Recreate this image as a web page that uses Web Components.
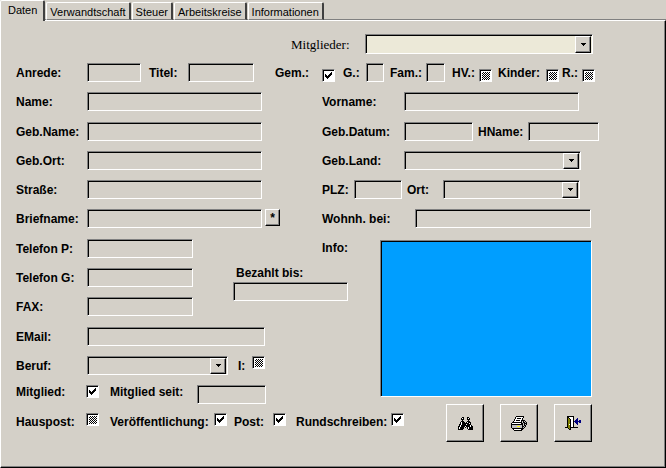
<!DOCTYPE html>
<html lang="de">
<head>
<meta charset="utf-8">
<title>Mitglieder</title>
<style>
  html, body { margin: 0; background: #d4d0c8; }
  body { font: bold 12px/14px "Liberation Sans", Arial, sans-serif; color: #000; }
</style>
</head>
<body>
<member-window></member-window>
<script>
const SUNKEN = `
  .sunken { box-sizing: border-box; margin: 0; border: 1px solid; border-color: #808080 #fff #fff #808080;
    border-radius: 0; box-shadow: inset 1px 1px 0 #000; background: #d4d0c8; outline: none;
    font: inherit; font-weight: normal; appearance: none; width: 100%; min-width: 0; padding: 1px 4px; }`;
const RAISED = `
  .raised { box-sizing: border-box; margin: 0; padding: 0; border: 1px solid; border-color: #fff #000 #000 #fff;
    border-radius: 0; box-shadow: inset -1px -1px 0 #808080; background: #d4d0c8; color: #000; font: inherit; }`;

/* Shared behaviour: a label and one control; --w is the share of the row, --l the label width. */
class FormControl extends HTMLElement {
  connectedCallback() {
    const root = this.attachShadow({ mode: "open" });
    root.innerHTML = `<style>
      ${SUNKEN}${RAISED}
      :host { display: grid; grid-template-columns: var(--l, 71px) minmax(0, 1fr); align-items: center;
        flex: var(--w, 1) 1 0; min-width: 0; margin-left: var(--gap, 0); }
      label { white-space: nowrap; align-self: var(--label-align, center); }
      ${this.css()}</style>
      <label for="c">${this.getAttribute("label")}</label>${this.control()}`;
  }
  css() { return ""; }
}

class TextField extends FormControl {
  css() { return `.sunken { height: 19px; }
    :host([stacked]) { grid-template-columns: minmax(0, 1fr); }
    :host([stacked]) label { padding: 0 0 2px 3px; }`; }
  control() { return `<input id="c" class="sunken" type="text">`; }
}

class ComboField extends FormControl {
  css() { return `
    .combo { display: grid; grid-template-columns: minmax(0, 1fr) 18px; }
    select { grid-area: 1 / 1 / 2 / 3; height: var(--h, 19px); }
    .arrow { grid-area: 1 / 2; justify-self: start; align-self: center; width: 16px;
      height: calc(var(--h, 19px) - 3px); pointer-events: none; display: grid; place-items: center; }
    svg { display: block; }
    :host([main]) label { font: 13px/15px "Liberation Serif", "Times New Roman", serif; }
    :host([main]) .sunken { background: #ece9d8; }`; }
  control() { return `<div class="combo"><select id="c" class="sunken"><option></option></select>
    <span class="arrow raised"><svg width="5" height="3" viewBox="0 0 5 3" shape-rendering="crispEdges"><path d="M0 0h5v1h-1v1h-1v1h-1v-1h-1v-1h-1z"/></svg></span></div>`; }
}

class MemoField extends FormControl {
  css() { return `:host { align-items: start; } label { align-self: start; padding-top: 1px; }
    .sunken { height: 157px; resize: none; background: #009eff; display: block; }`; }
  control() { return `<textarea id="c" class="sunken"></textarea>`; }
}

class CheckField extends FormControl {
  css() { return `
    :host { flex: none; grid-template-columns: var(--l, 71px) 13px; }
    .box { display: grid; align-self: var(--box-align, center); }
    input, svg { grid-area: 1 / 1; }
    input.sunken { width: 13px; height: 13px; padding: 2px 1px 1px 2px; background: #fff; }
    input.sunken:indeterminate { background: repeating-conic-gradient(#000 0 25%, #fff 0 50%) 0 0 / 2px 2px content-box, #fff; }
    svg { place-self: center; pointer-events: none; visibility: hidden; }
    input:checked + svg { visibility: visible; }`; }
  control() { return `<span class="box"><input id="c" class="sunken" type="checkbox">
    <svg width="7" height="7" viewBox="0 0 7 7" shape-rendering="crispEdges"><path d="M0 2h1v1h1v1h1v-1h1v-1h1v-1h1v-1h1v3h-1v1h-1v1h-1v1h-1v1h-1v-1h-1v-1h-1z"/></svg></span>`; }
  connectedCallback() {
    super.connectedCallback();
    const box = this.shadowRoot.querySelector("input");
    box.checked = this.hasAttribute("checked");
    box.indeterminate = !box.checked;
  }
}

const COLORS = { "#": "#000", w: "#fff", g: "#808080", l: "#c0c0c0", y: "#ff0", o: "#808000", b: "#000080" };
const ICONS = {
  find: [
    "....##...##....",
    "...#w#...#w#...",
    "...###...###...",
    "....#.....#....",
    "...###...###...",
    "..#w###.#w###..",
    "..#w#######w#..",
    ".##w####w####..",
    ".#w#########w#.",
    "##w####w####w##",
    "#w####.#.#w####",
    "#w####...#w####",
    "#####.....#####"],
  print: [
    ".....########...",
    "....#wwwwwww#...",
    "....#w####w#....",
    "...#wwwwwww#....",
    "...#w####w####..",
    "..#wwwwwww#l#l#.",
    ".##########l##l#",
    "#wwwwwwwww##l###",
    "############l#l#",
    "#llllllllll#l##.",
    "#lllllyyyll##l#.",
    "#llllllllll#l#..",
    ".############...",
    "..#wwwwwww##....",
    "...########....."],
  exit: [
    "..#######.......",
    "..##wwww#.......",
    "..#o#www#...b...",
    "..#oo#ww#..bb...",
    "..#oo#ww#.bbb.bb",
    "..#oo#ww#bbbbbbb",
    "..#oo#ww#.bbb.bb",
    "..#oo#ww#..bb...",
    "..#ow#ww#...b...",
    "..#oo#ww#.......",
    "..#oo#ww#.......",
    "###oo########...",
    "...#o#..........",
    "....##.........."]
};

class IconButton extends HTMLElement {
  connectedCallback() {
    const rows = ICONS[this.getAttribute("icon")];
    const cells = rows.map((r, y) => [...r].map((c, x) =>
      COLORS[c] ? `<rect x="${x}" y="${y}" width="1" height="1" fill="${COLORS[c]}"/>` : "").join("")).join("");
    this.attachShadow({ mode: "open" }).innerHTML = `<style>
      :host { display: block; } ${RAISED}
      button { width: 38px; height: 38px; display: grid; place-items: center; }</style>
      <button class="raised" type="button" aria-label="${this.getAttribute("name")}">
      <svg width="${rows[0].length}" height="${rows.length}" shape-rendering="crispEdges">${cells}</svg></button>`;
  }
}

class TabStrip extends HTMLElement {
  connectedCallback() {
    this.attachShadow({ mode: "open" }).innerHTML = `<style>
      :host { display: flex; align-items: flex-end; height: 20px; gap: 1px; box-shadow: inset 0 -1px 0 #808080;
        font: 11px/13px "Liberation Sans", Arial, sans-serif; }
      ::slotted(button) { box-sizing: border-box; height: 18px; margin: 0; padding: 2px 3px 0 3px; font: inherit;
        color: #000; background: #d4d0c8; border: solid; border-width: 1px 2px 1px 1px;
        border-color: #fff #404040 #808080 #fff; border-radius: 2px 2px 0 0; white-space: nowrap; }
      ::slotted(button[aria-selected="true"]) { height: 21px; margin: 0 0 -1px; padding: 0 6px 1px 7px;
        border-bottom: 0; position: relative; }</style><slot></slot>`;
    this.setAttribute("role", "tablist");
  }
}

class MemberForm extends HTMLElement {
  connectedCallback() {
    this.attachShadow({ mode: "open" }).innerHTML = `<style>
      ${RAISED}
      :host { display: block; padding: 13px 66px 24px 15px; }
      .row { display: flex; }
      .main { padding: 0 6px 9px 275px; }
      .first { padding-right: 4px; --box-align: end; margin-bottom: 10px; }
      .grid { display: grid; grid-template-columns: 306fr 277fr; row-gap: 10px; }
      .grid > *, .lower > * { min-width: 0; }
      .grid.name { margin-bottom: 11px; }
      .left { padding-right: 60px; }
      .left.brief { padding-right: 42px; }
      .star { flex: none; width: 15px; height: 17px; margin-left: 3px; line-height: 14px; }
      .lower { display: grid; grid-template-columns: 306fr 58px 219fr; margin-top: 11px; }
      .details { grid-area: 1 / 1 / 2 / 3; }
      memo-field { grid-area: 1 / 2 / 2 / 4; margin: 1px 7px 0 0; }
      .stack { display: grid; row-gap: 10px; }
      .phones { display: flex; padding-right: 32px; margin-bottom: 11px; }
      .phones .stack { flex: 177 1 0; min-width: 0; }
      .phones > text-field { align-self: end; padding-bottom: 15px; }
      .data { --box-align: start; }
      .member { --label-align: start; }
      .footer { display: flex; justify-content: space-between; padding-right: 7px; }
      .checks { display: flex; align-items: start; padding-top: 9px; --box-align: start; --label-align: end; }
      .checks check-field { height: 16px; }
      .actions { display: flex; gap: 16px; }
      </style>
    <div class="row main"><combo-field main label="Mitglieder:" style="--l:74px;--h:20px"></combo-field></div>
    <div class="row first">
      <text-field label="Anrede:" style="--w:125"></text-field>
      <text-field label="Titel:" style="--l:39px;--w:105;--gap:8px"></text-field>
      <check-field checked label="Gem.:" style="--l:47px;--gap:21px"></check-field>
      <text-field label="G.:" style="--l:23px;--w:41;--gap:8px"></text-field>
      <text-field label="Fam.:" style="--l:36px;--w:55;--gap:6px"></text-field>
      <check-field label="HV.:" style="--l:27px;--gap:7px"></check-field>
      <check-field label="Kinder:" style="--l:48px;--gap:6px"></check-field>
      <check-field label="R.:" style="--l:20px;--gap:3px"></check-field>
    </div>
    <div class="grid name">
      <div class="row left"><text-field label="Name:"></text-field></div>
      <div class="row" style="padding-right:20px"><text-field label="Vorname:" style="--l:82px"></text-field></div>
    </div>
    <div class="grid">
      <div class="row left"><text-field label="Geb.Name:"></text-field></div>
      <div class="row"><text-field label="Geb.Datum:" style="--l:82px;--w:151"></text-field>
        <text-field label="HName:" style="--l:50px;--w:121;--gap:5px"></text-field></div>
      <div class="row left"><text-field label="Geb.Ort:"></text-field></div>
      <div class="row" style="padding-right:18px"><combo-field label="Geb.Land:" style="--l:82px"></combo-field></div>
      <div class="row left"><text-field label="Straße:"></text-field></div>
      <div class="row" style="padding-right:19px"><text-field label="PLZ:" style="--l:32px;--w:80"></text-field>
        <combo-field label="Ort:" style="--l:36px;--w:173;--gap:5px"></combo-field></div>
      <div class="row left brief"><text-field label="Briefname:"></text-field>
        <button class="raised star" type="button">*</button></div>
      <div class="row" style="padding-right:8px"><text-field label="Wohnh. bei:" style="--l:93px"></text-field></div>
    </div>
    <div class="lower">
      <div class="details">
        <div class="phones">
          <div class="stack">
            <text-field label="Telefon P:"></text-field>
            <text-field label="Telefon G:"></text-field>
            <text-field label="FAX:"></text-field>
          </div>
          <text-field stacked label="Bezahlt bis:" style="--w:115;--gap:40px"></text-field>
        </div>
        <div class="stack data">
          <div class="row" style="padding-right:115px"><text-field label="EMail:"></text-field></div>
          <div class="row" style="padding-right:115px"><combo-field label="Beruf:"></combo-field>
            <check-field label="I:" style="--l:14px;--gap:10px"></check-field></div>
          <div class="row member" style="padding-right:114px"><check-field checked label="Mitglied:" style="--l:70px"></check-field>
            <text-field label="Mitglied seit:" style="--l:87px;--gap:11px"></text-field></div>
        </div>
      </div>
      <memo-field label="Info:" style="--l:58px"></memo-field>
    </div>
    <div class="footer">
      <div class="checks">
        <check-field label="Hauspost:" style="--l:70px"></check-field>
        <check-field checked label="Veröffentlichung:" style="--l:104px;--gap:11px"></check-field>
        <check-field checked label="Post:" style="--l:39px;--gap:7px"></check-field>
        <check-field checked label="Rundschreiben:" style="--l:95px;--gap:10px"></check-field>
      </div>
      <div class="actions">
        <icon-button icon="find" name="Suchen"></icon-button>
        <icon-button icon="print" name="Drucken"></icon-button>
        <icon-button icon="exit" name="Schließen"></icon-button>
      </div>
    </div>`;
  }
}

class MemberWindow extends HTMLElement {
  connectedCallback() {
    this.attachShadow({ mode: "open" }).innerHTML = `<style>
      :host { display: flex; flex-direction: column; min-height: 100vh; }
      .panel { flex: 1; border: 1px solid; border-color: #fff #000 #000 #fff; box-shadow: inset -1px -1px 0 #808080; }
    </style>
    <tab-strip>
      <button role="tab" aria-selected="true">Daten</button>
      <button role="tab">Verwandtschaft</button>
      <button role="tab">Steuer</button>
      <button role="tab">Arbeitskreise</button>
      <button role="tab">Informationen</button>
    </tab-strip>
    <div class="panel" role="tabpanel"><member-form></member-form></div>`;
  }
}

customElements.define("text-field", TextField);
customElements.define("combo-field", ComboField);
customElements.define("memo-field", MemoField);
customElements.define("check-field", CheckField);
customElements.define("icon-button", IconButton);
customElements.define("tab-strip", TabStrip);
customElements.define("member-form", MemberForm);
customElements.define("member-window", MemberWindow);
</script>
</body>
</html>
